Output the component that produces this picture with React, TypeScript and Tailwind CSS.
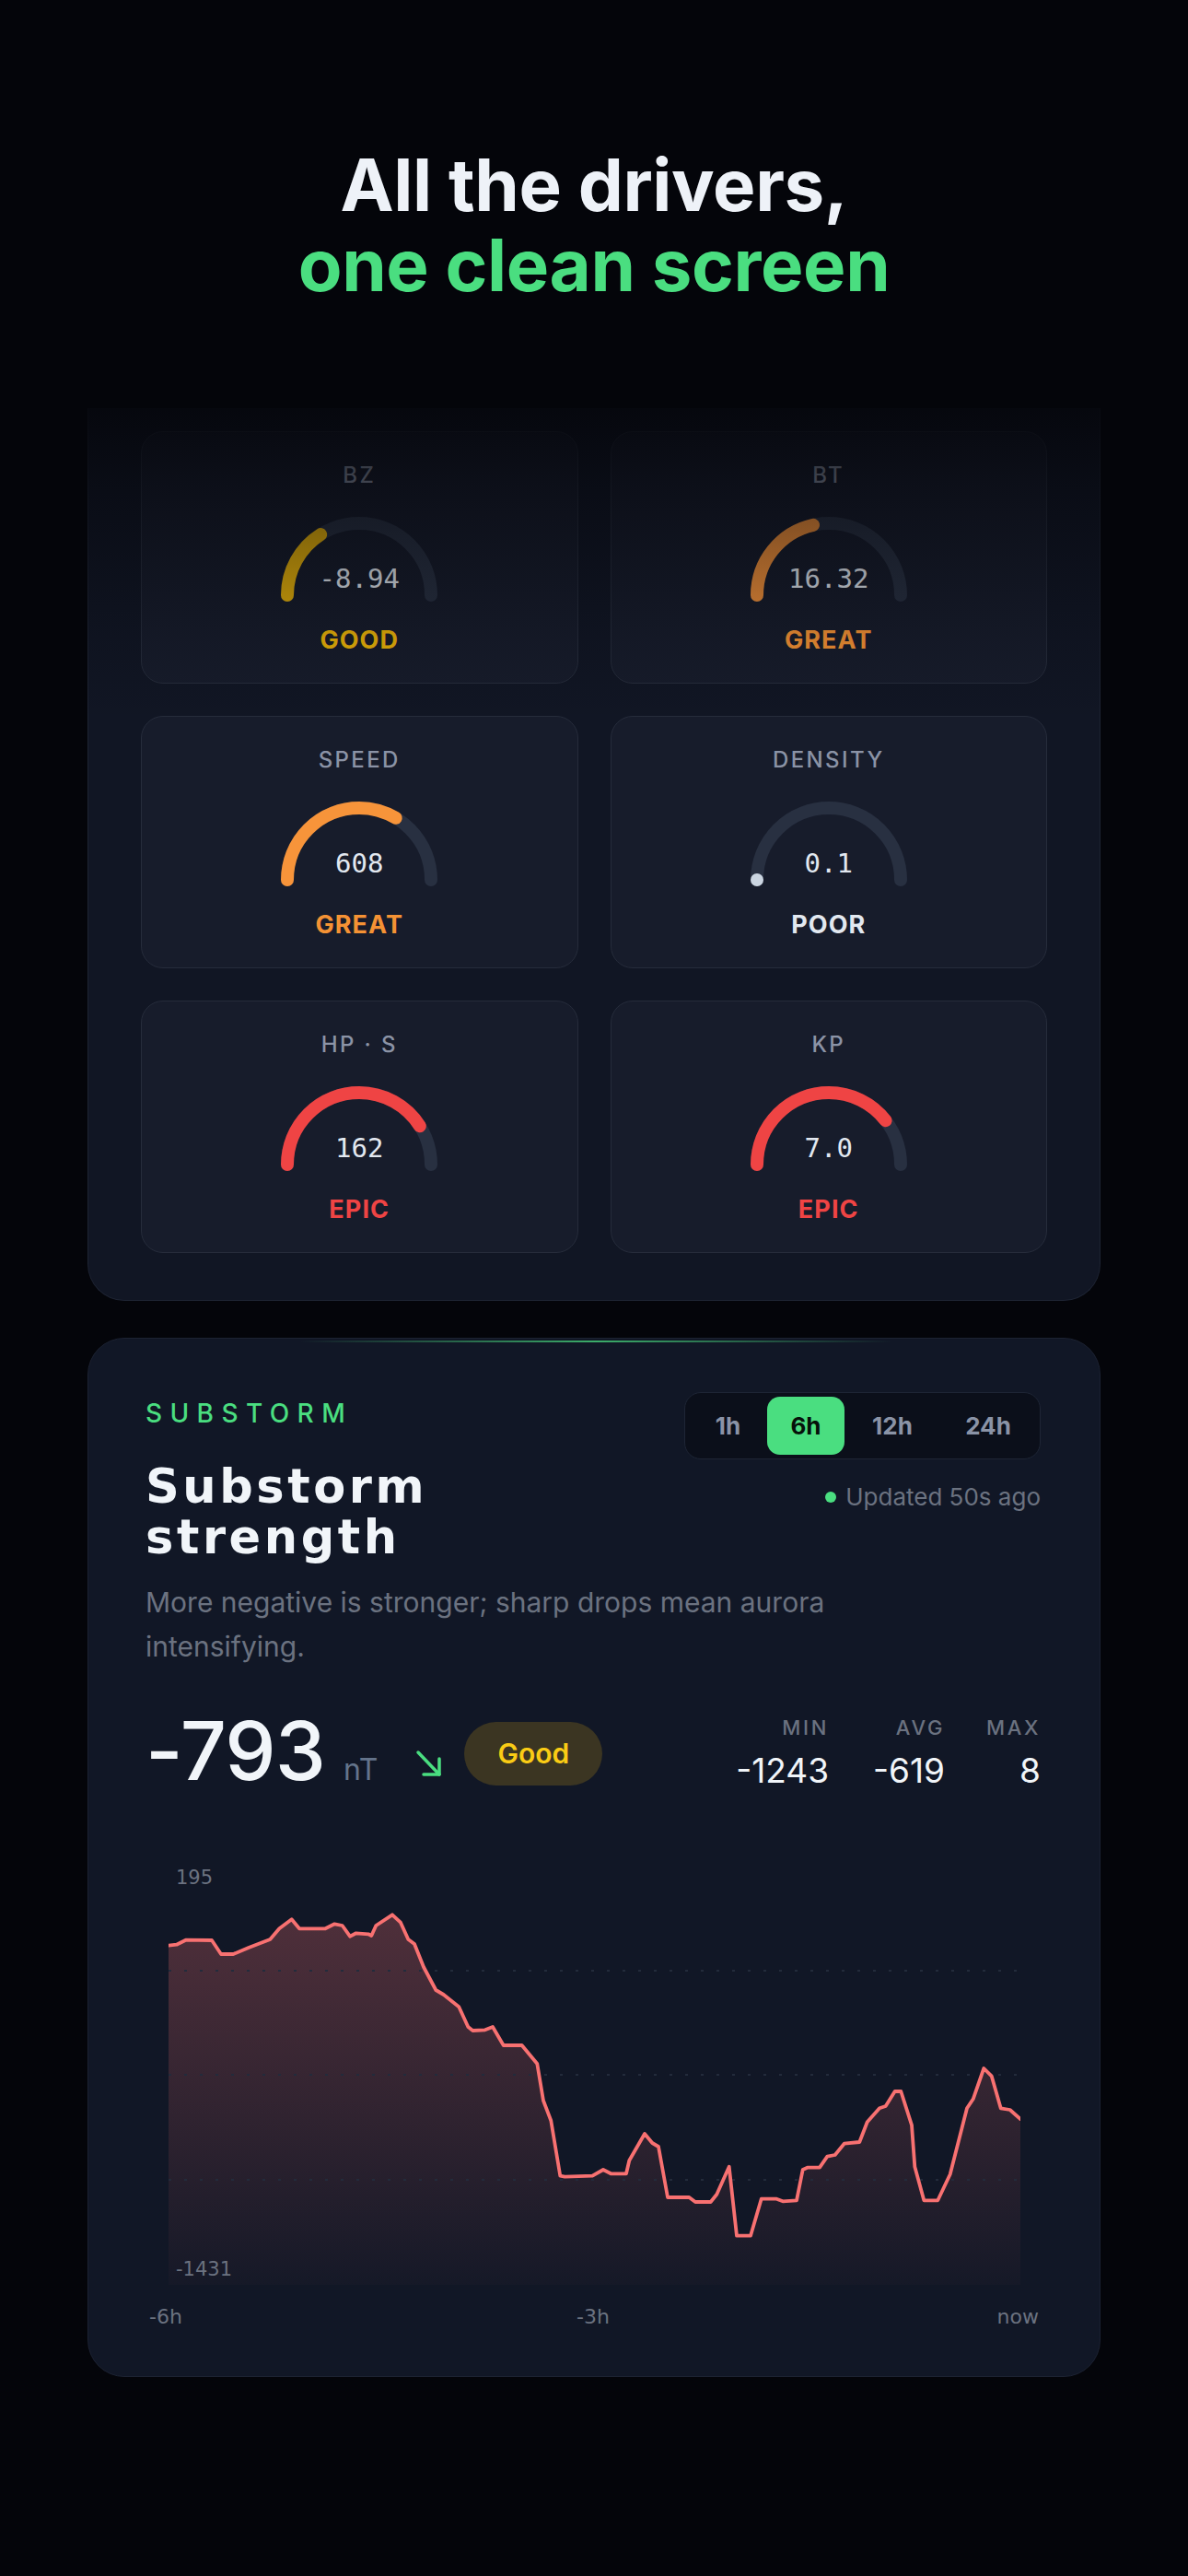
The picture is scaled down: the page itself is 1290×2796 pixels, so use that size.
import React from "react";

type GaugeItem = {
  label: string;
  value: string;
  status: string;
  color: string;
  statusClass: string;
  frac: number;
};

const gauges: GaugeItem[] = [
  { label: "BZ", value: "-8.94", status: "GOOD", color: "#e5b00a", statusClass: "text-[#eab308]", frac: 0.32 },
  { label: "BT", value: "16.32", status: "GREAT", color: "#f2913a", statusClass: "text-[#f59234]", frac: 0.43 },
  { label: "SPEED", value: "608", status: "GREAT", color: "#f7943a", statusClass: "text-[#f59234]", frac: 0.67 },
  { label: "DENSITY", value: "0.1", status: "POOR", color: "#cbd5e1", statusClass: "text-[#e2e8f0]", frac: 0 },
  { label: "HP · S", value: "162", status: "EPIC", color: "#ef4444", statusClass: "text-[#ef4444]", frac: 0.82 },
  { label: "KP", value: "7.0", status: "EPIC", color: "#ef4444", statusClass: "text-[#ef4444]", frac: 0.79 },
];

const chartPts: [number, number][] = [
  [0, 86.7], [8.7, 85.7], [18.7, 80.7], [47, 81], [57, 96], [70.3, 96], [87, 89], [110.3, 80],
  [120.3, 68.3], [133.7, 58.3], [142, 68.3], [170.3, 68.3], [180.3, 63.3], [188.7, 65], [197, 76.7],
  [203.7, 73.3], [217, 74.3], [220.3, 76], [225.3, 65], [243, 53.3], [252, 61.7], [260.3, 80],
  [267, 85], [277, 110], [290.3, 135], [298.7, 140], [315.3, 153.3], [325.3, 175], [330.3, 179],
  [343.7, 178.3], [352, 175], [363.7, 195], [383.7, 195], [400.3, 215], [407, 255], [415.3, 276.7],
  [425.3, 336.7], [430.3, 337.7], [460.3, 336.7], [472, 330], [480.3, 334.3], [497, 334.3],
  [500.3, 320], [517, 291], [525.3, 301], [532, 305], [542, 360], [565.3, 360], [572, 365],
  [588.7, 365], [595.3, 356.7], [608.7, 326.7], [617, 401.7], [632, 401.7], [643.7, 361.7],
  [660.3, 361.7], [667, 364.3], [682, 363.3], [688.7, 330], [693.7, 327.7], [707, 327.7],
  [715.3, 315.7], [723.7, 314], [733.7, 301.7], [750.3, 300], [758.7, 278.3], [772, 263.3],
  [778.7, 261], [788.7, 245], [795.3, 245], [807, 281.7], [810.3, 326.7], [820.3, 363.3],
  [835.3, 363.3], [848.7, 335], [867, 263.3], [873.7, 253.3], [885.3, 220], [893.7, 228.3],
  [903.7, 263.3], [913.7, 265], [925, 275],
];

const linePath = chartPts.map((p, i) => `${i === 0 ? "M" : "L"} ${p[0]} ${p[1]}`).join(" ");
const areaPath = `${linePath} L 925 455 L 0 455 Z`;

function Gauge({ frac, color }: { frac: number; color: string }) {
  const d = "M 12 88 A 78 78 0 0 1 168 88";
  return (
    <svg width="180" height="110" viewBox="0 0 180 110">
      <path d={d} fill="none" stroke="#283041" strokeWidth="14" strokeLinecap="round" />
      {frac > 0 ? (
        <path
          d={d}
          fill="none"
          stroke={color}
          strokeWidth="14"
          strokeLinecap="round"
          pathLength={100}
          strokeDasharray={`${frac * 100} 200`}
        />
      ) : (
        <circle cx="12" cy="88" r="7" fill={color} />
      )}
    </svg>
  );
}

function GaugeCard({ g }: { g: GaugeItem }) {
  return (
    <div className="h-[274px] rounded-[24px] border border-[#262c3b] bg-[#171c2b] flex flex-col items-center pt-[32px]">
      <div className="text-[24px] leading-[30px] tracking-[0.1em] text-[#8b93a6] font-medium">{g.label}</div>
      <div className="relative mt-[27px] w-[180px] h-[110px]">
        <Gauge frac={g.frac} color={g.color} />
        <div className="absolute left-0 right-0 top-[55px] text-center font-['DejaVu_Sans_Mono',monospace] text-[29px] leading-[30px] text-[#e2e8f0]">
          {g.value}
        </div>
      </div>
      <div className={`mt-[10px] text-[27px] leading-[34px] font-bold tracking-[0.04em] ${g.statusClass}`}>{g.status}</div>
    </div>
  );
}

export default function App() {
  return (
    <div className="w-[1290px] min-h-[2796px] bg-[#04050a] font-['Inter','Noto_Sans',sans-serif] pb-[214px]">
      {/* Heading */}
      <div className="pt-[157px] text-center text-[78px] leading-[87px] font-bold tracking-[-0.005em]">
        <div className="text-[#eef2f8]">All the drivers,</div>
        <div className="text-[#4ade80]">one clean screen</div>
      </div>

      {/* Gauges panel */}
      <div className="relative mx-[95px] mt-[112px] rounded-b-[40px] border border-t-0 border-[#1e2433] bg-[#111624] px-[57px] pt-[25px] pb-[51px]">
        <div className="grid grid-cols-2 gap-[35px]">
          {gauges.map((g) => (
            <GaugeCard key={g.label} g={g} />
          ))}
        </div>
        <div className="pointer-events-none absolute -left-px -right-px top-0 h-[340px] bg-[linear-gradient(to_bottom,rgba(4,5,10,0.85),rgba(4,5,10,0.55)_25%,rgba(4,5,10,0.14)_75%,rgba(4,5,10,0))]" />
      </div>

      {/* Substorm panel */}
      <div className="relative mx-[95px] mt-[40px] rounded-[40px] border border-[#1c2232] bg-[#111726] pl-[62px] pr-[64px] pt-[58px] pb-[50px]">
        <div className="absolute left-[229px] top-[2px] h-[2px] w-[644px] bg-[linear-gradient(to_right,rgba(74,222,128,0),rgba(74,222,128,0.75),rgba(74,222,128,0))]" />

        <div className="flex items-start justify-between">
          <div>
            <div className="mt-[6px] text-[28px] leading-[34px] font-medium tracking-[0.3em] text-[#4ade80]">SUBSTORM</div>
            <div className="mt-[35px] font-['DejaVu_Sans',sans-serif] text-[51px] leading-[55px] font-bold tracking-[0.07em] text-[#f1f5f9]">
              <div>Substorm</div>
              <div>strength</div>
            </div>
          </div>
          <div className="flex flex-col items-end">
            <div className="flex w-[387px] rounded-[18px] border border-[#1e2535] bg-[#0b0f1a] p-[4px]">
              <div className="flex h-[63px] w-[85px] items-center justify-center text-[26px] font-bold text-[#8a93a6]">1h</div>
              <div className="flex h-[63px] w-[84px] items-center justify-center rounded-[14px] bg-[#4ade80] text-[26px] font-bold text-[#06110a]">6h</div>
              <div className="flex h-[63px] w-[104px] items-center justify-center text-[26px] font-bold text-[#8a93a6]">12h</div>
              <div className="flex h-[63px] w-[104px] items-center justify-center text-[26px] font-bold text-[#8a93a6]">24h</div>
            </div>
            <div className="mt-[25px] flex items-center gap-[10px] text-[26px] leading-[32px] text-[#6b7280]">
              <span className="h-[12px] w-[12px] rounded-full bg-[#4ade80]" />
              <span>Updated 50s ago</span>
            </div>
          </div>
        </div>

        <p className="mt-[19px] max-w-[820px] text-[30px] leading-[48px] text-[#6b7280]">
          More negative is stronger; sharp drops mean aurora intensifying.
        </p>

        <div className="mt-[45px] flex items-start justify-between">
          <div className="flex items-center">
            <div className="flex items-baseline">
              <span className="text-[88px] leading-[88px] font-medium tracking-[-0.01em] text-[#f1f5f9]">-793</span>
              <span className="ml-[20px] text-[32px] text-[#64748b]">nT</span>
            </div>
            <svg className="ml-[40px] mt-[26px]" width="32" height="34" viewBox="0 0 32 34" fill="none" stroke="#4ade80" strokeWidth="3.5" strokeLinecap="round" strokeLinejoin="round">
              <path d="M4 5 L27 29" />
              <path d="M27 12 V29 H10" />
            </svg>
            <div className="ml-[22px] mt-[6px] flex h-[69px] w-[150px] items-center justify-center rounded-full bg-[#3b3522] text-[30px] font-semibold text-[#facc15]">
              Good
            </div>
          </div>
          <div className="mt-[5px] flex">
            <div className="w-[110px] text-right">
              <div className="text-[22px] leading-[28px] font-medium tracking-[0.12em] text-[#6b7280]">MIN</div>
              <div className="mt-[11px] text-[37px] leading-[44px] text-[#f1f5f9]">-1243</div>
            </div>
            <div className="w-[126px] text-right">
              <div className="text-[22px] leading-[28px] font-medium tracking-[0.12em] text-[#6b7280]">AVG</div>
              <div className="mt-[11px] text-[37px] leading-[44px] text-[#f1f5f9]">-619</div>
            </div>
            <div className="w-[104px] text-right">
              <div className="text-[22px] leading-[28px] font-medium tracking-[0.12em] text-[#6b7280]">MAX</div>
              <div className="mt-[11px] text-[37px] leading-[44px] text-[#f1f5f9]">8</div>
            </div>
          </div>
        </div>

        <div className="relative mt-[80px] h-[455px]">
          <svg className="ml-[25px]" width="925" height="455" viewBox="0 0 925 455">
            <defs>
              <linearGradient id="areaFill" x1="0" y1="0" x2="0" y2="1">
                <stop offset="0" stopColor="#f87171" stopOpacity="0.27" />
                <stop offset="1" stopColor="#f87171" stopOpacity="0.02" />
              </linearGradient>
            </defs>
            <path d={areaPath} fill="url(#areaFill)" />
            <line x1="0" y1="114" x2="925" y2="114" stroke="#232b3b" strokeWidth="2" strokeDasharray="3 14" />
            <line x1="0" y1="227" x2="925" y2="227" stroke="#232b3b" strokeWidth="2" strokeDasharray="3 14" />
            <line x1="0" y1="341" x2="925" y2="341" stroke="#232b3b" strokeWidth="2" strokeDasharray="3 14" />
            <path d={linePath} fill="none" stroke="#f87171" strokeWidth="3.8" strokeLinejoin="round" strokeLinecap="round" />
          </svg>
          <div className="absolute left-[33px] top-[0px] font-['DejaVu_Sans',sans-serif] text-[21px] leading-[26px] text-[#6b7280]">195</div>
          <div className="absolute left-[33px] top-[425px] font-['DejaVu_Sans',sans-serif] text-[21px] leading-[26px] text-[#6b7280]">-1431</div>
        </div>

        <div className="mt-[21px] grid grid-cols-3 font-['DejaVu_Sans',sans-serif] text-[22px] leading-[28px] text-[#6b7280]">
          <div className="pl-[4px] text-left">-6h</div>
          <div className="text-center">-3h</div>
          <div className="pr-[2px] text-right">now</div>
        </div>
      </div>
    </div>
  );
}
